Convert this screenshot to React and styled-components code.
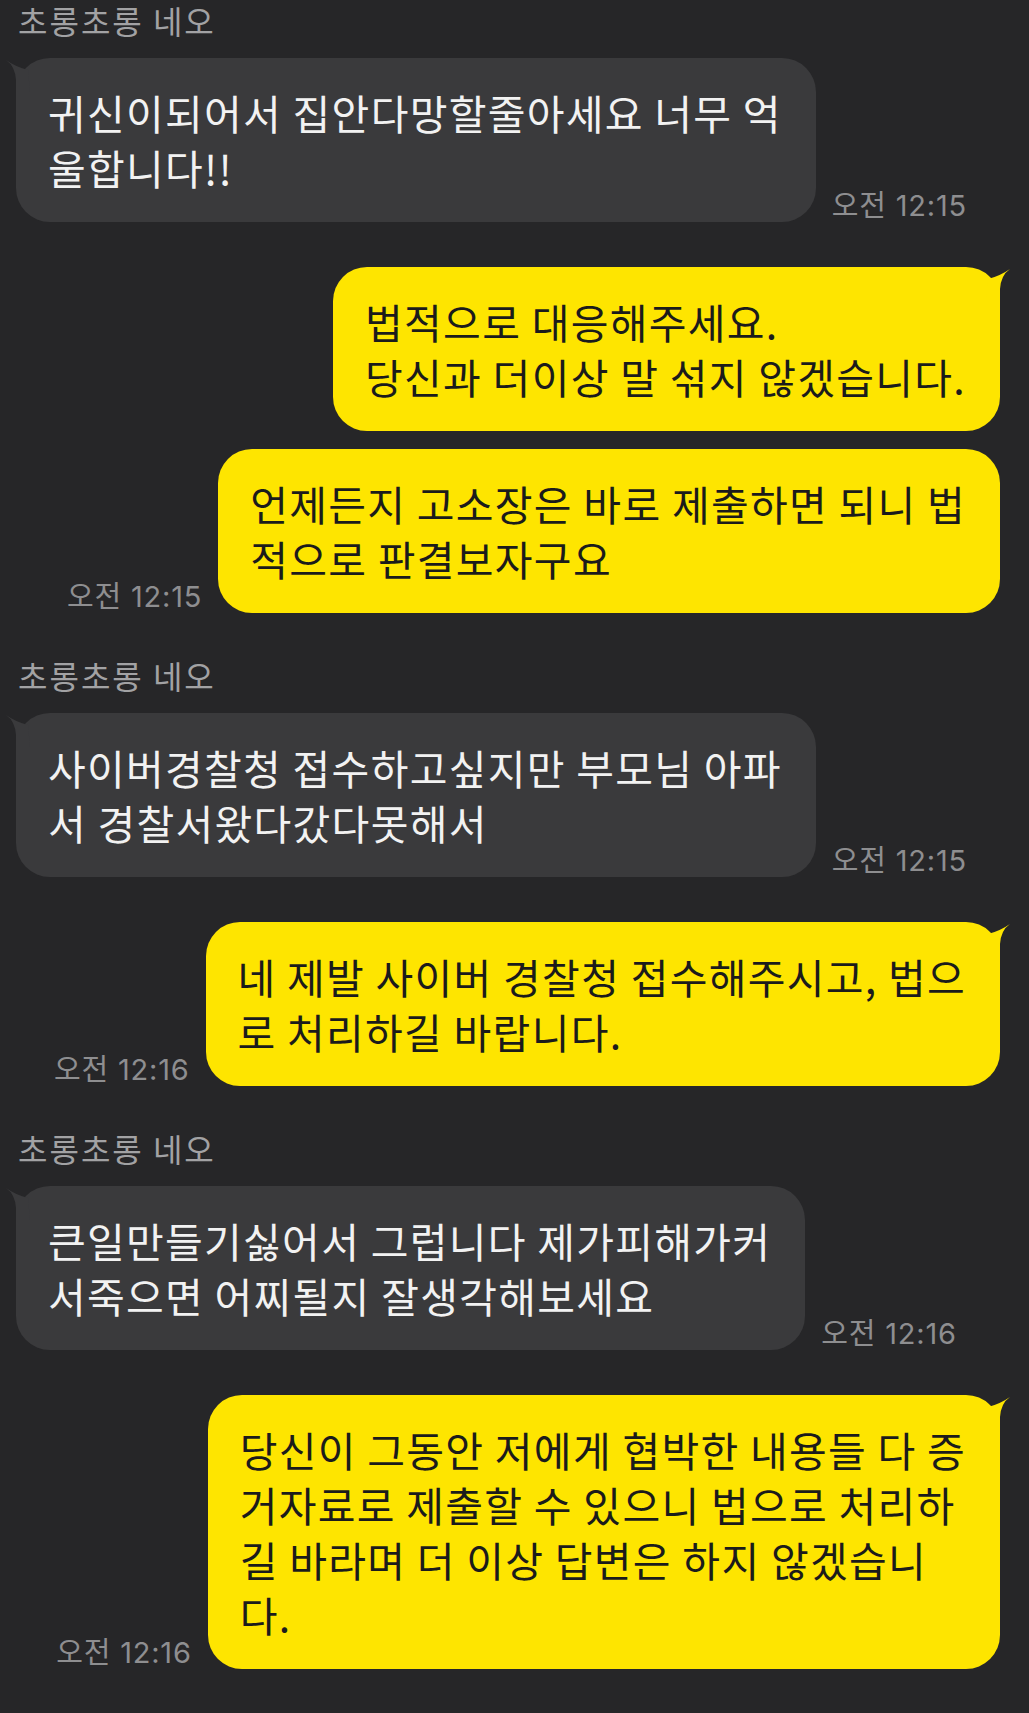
import React from 'react';
import styled, { createGlobalStyle } from 'styled-components';

const GlobalStyle = createGlobalStyle`
  html, body {
    margin: 0;
    padding: 0;
    background: #262628;
  }
  body {
    font-family: "Noto Sans CJK KR", "Noto Sans", sans-serif;
  }
`;

const Thread = styled.div`
  display: flex;
  flex-direction: column;
  gap: 45px;
  padding: 3px 29px 43px 16px;
  background: #262628;
  box-sizing: border-box;
  width: 1029px;
`;

const Group = styled.section`
  display: flex;
  flex-direction: column;
`;

const Name = styled.div`
  font-size: 32px;
  line-height: 34px;
  letter-spacing: 2px;
  color: #a2a2a4;
  padding-left: 2px;
  margin-bottom: 21px;
  white-space: nowrap;
`;

const Row = styled.div`
  display: flex;
  align-items: flex-end;
  justify-content: ${(p) => (p.$mine ? 'flex-end' : 'flex-start')};
  gap: 16px;
  & + & {
    margin-top: 18px;
  }
`;

const Bubble = styled.div`
  position: relative;
  padding: 27px 34px 27px 32px;
  border-radius: 34px;
  background: ${(p) => (p.$mine ? '#fee500' : '#3a3a3c')};
  color: ${(p) => (p.$mine ? '#1b1b1b' : '#f2f2f2')};
  font-size: 41px;
  line-height: 55px;
  letter-spacing: 1.3px;
  white-space: nowrap;
`;

const Horn = styled.svg`
  position: absolute;
  top: 0;
  width: 46px;
  height: 34px;
  ${(p) =>
    p.$mine
      ? 'right: -12px;'
      : 'left: -12px; transform: scaleX(-1);'}
  fill: ${(p) => (p.$mine ? '#fee500' : '#3a3a3c')};
`;

const Time = styled.span`
  flex-shrink: 0;
  font-family: Inter, "Noto Sans CJK KR", sans-serif;
  font-size: 29px;
  line-height: 28px;
  letter-spacing: 0.8px;
  color: #8e8e90;
  margin-bottom: 2px;
  white-space: nowrap;
`;

const groups = [
  {
    mine: false,
    name: '초롱초롱 네오',
    msgs: [
      { lines: ['귀신이되어서 집안다망할줄아세요 너무 억', '울합니다!!'], time: '오전 12:15' },
    ],
  },
  {
    mine: true,
    msgs: [
      { lines: ['법적으로 대응해주세요.', '당신과 더이상 말 섞지 않겠습니다.'] },
      { lines: ['언제든지 고소장은 바로 제출하면 되니 법', '적으로 판결보자구요'], time: '오전 12:15' },
    ],
  },
  {
    mine: false,
    name: '초롱초롱 네오',
    msgs: [
      { lines: ['사이버경찰청 접수하고싶지만 부모님 아파', '서 경찰서왔다갔다못해서'], time: '오전 12:15' },
    ],
  },
  {
    mine: true,
    msgs: [
      { lines: ['네 제발 사이버 경찰청 접수해주시고, 법으', '로 처리하길 바랍니다.'], time: '오전 12:16' },
    ],
  },
  {
    mine: false,
    name: '초롱초롱 네오',
    msgs: [
      { lines: ['큰일만들기싫어서 그럽니다 제가피해가커', '서죽으면 어찌될지 잘생각해보세요'], time: '오전 12:16' },
    ],
  },
  {
    mine: true,
    msgs: [
      {
        lines: [
          '당신이 그동안 저에게 협박한 내용들 다 증',
          '거자료로 제출할 수 있으니 법으로 처리하',
          '길 바라며 더 이상 답변은 하지 않겠습니',
          '다.',
        ],
        time: '오전 12:16',
      },
    ],
  },
];

function Message({ mine, first, lines, time }) {
  return (
    <Row $mine={mine}>
      {mine && time && <Time>{time}</Time>}
      <Bubble $mine={mine}>
        {first && (
          <Horn $mine={mine} viewBox="0 0 46 34" aria-hidden="true">
            <path d="M22 12 Q34 9 44 2 Q35 8 34 22 L34 34 L20 34 Z" />
          </Horn>
        )}
        {lines.map((l, i) => (
          <React.Fragment key={i}>
            {i > 0 && <br />}
            {l}
          </React.Fragment>
        ))}
      </Bubble>
      {!mine && time && <Time>{time}</Time>}
    </Row>
  );
}

export default function App() {
  return (
    <>
      <GlobalStyle />
      <Thread>
        {groups.map((g, gi) => (
          <Group key={gi}>
            {g.name && <Name>{g.name}</Name>}
            {g.msgs.map((m, mi) => (
              <Message key={mi} mine={g.mine} first={mi === 0} lines={m.lines} time={m.time} />
            ))}
          </Group>
        ))}
      </Thread>
    </>
  );
}
